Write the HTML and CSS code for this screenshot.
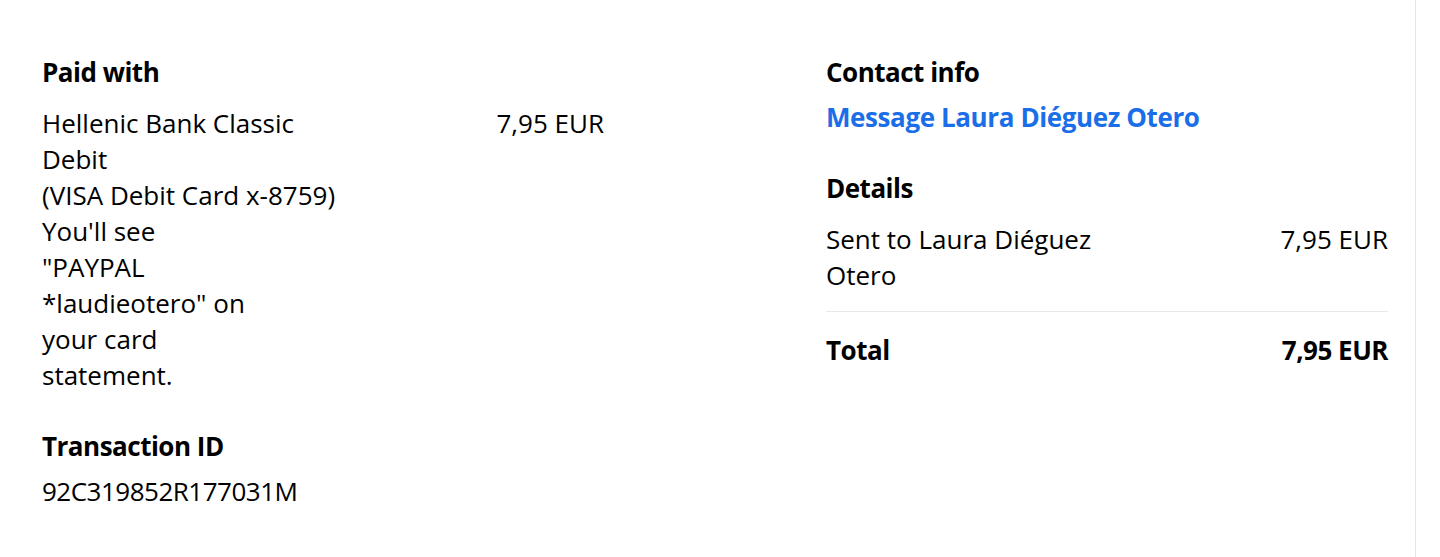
FILE: index.html
```html
<!DOCTYPE html>
<html lang="en">
<head>
<meta charset="utf-8">
<title>Transaction details</title>
<link rel="stylesheet" href="styles.css">
</head>
<body>
<div class="page">
  <div class="grid">
    <div class="col">
      <section class="block">
        <h2 class="heading">Paid with</h2>
        <div class="pay-row">
          <div class="pay-desc">
            <div class="card-name">Hellenic Bank Classic Debit</div>
            <div>(VISA Debit Card x-8759)</div>
            <div class="statement">You'll see "PAYPAL *laudieotero" on your card statement.</div>
          </div>
          <div class="amount">7,95 EUR</div>
        </div>
      </section>
      <section class="block block-gap">
        <h2 class="heading heading-tight">Transaction ID</h2>
        <div class="txn-id">92C319852R177031M</div>
      </section>
    </div>
    <div class="col">
      <section class="block">
        <h2 class="heading heading-tight">Contact info</h2>
        <a class="link" href="#">Message Laura Diéguez Otero</a>
      </section>
      <section class="block block-gap">
        <h2 class="heading">Details</h2>
        <div class="line-row">
          <div class="line-label">Sent to Laura Diéguez Otero</div>
          <div class="amount">7,95 EUR</div>
        </div>
        <div class="divider"></div>
        <div class="line-row total">
          <div>Total</div>
          <div>7,95 EUR</div>
        </div>
      </section>
    </div>
  </div>
</div>
</body>
</html>
```

FILE: styles.css
```css
* { box-sizing: border-box; }
html, body {
  margin: 0;
  padding: 0;
  background: #ffffff;
}
body {
  font-family: "Open Sans", "Noto Sans", sans-serif;
  font-size: 26px;
  line-height: 36px;
  color: #000000;
}
.page {
  width: 1416px;
  height: 557px;
  border-right: 1px solid #e3e3e3;
}
.grid {
  display: grid;
  grid-template-columns: 562px 562px;
  column-gap: 222px;
  padding: 54px 0 0 42px;
}
.block { display: flex; flex-direction: column; }
.block-gap { margin-top: 35px; }
.heading {
  margin: 0 0 15px 0;
  font-size: 26px;
  line-height: 36px;
  font-weight: 700;
  letter-spacing: -0.5px;
}
.heading-tight { margin-bottom: 9px; }
.pay-row {
  display: flex;
  justify-content: space-between;
  align-items: flex-start;
}
.pay-desc { width: 315px; }
.statement { width: 205px; }
.amount { white-space: nowrap; }
.txn-id { letter-spacing: -0.5px; }
.link {
  color: #1a6fe8;
  font-weight: 700;
  letter-spacing: -0.4px;
  text-decoration: none;
  line-height: 36px;
}
.line-row {
  display: flex;
  justify-content: space-between;
  align-items: flex-start;
}
.line-label { width: 280px; }
.divider {
  height: 1px;
  background: #e8e8e8;
  margin: 18px 0 20px 0;
}
.total {
  font-weight: 700;
  letter-spacing: -0.5px;
}
```
